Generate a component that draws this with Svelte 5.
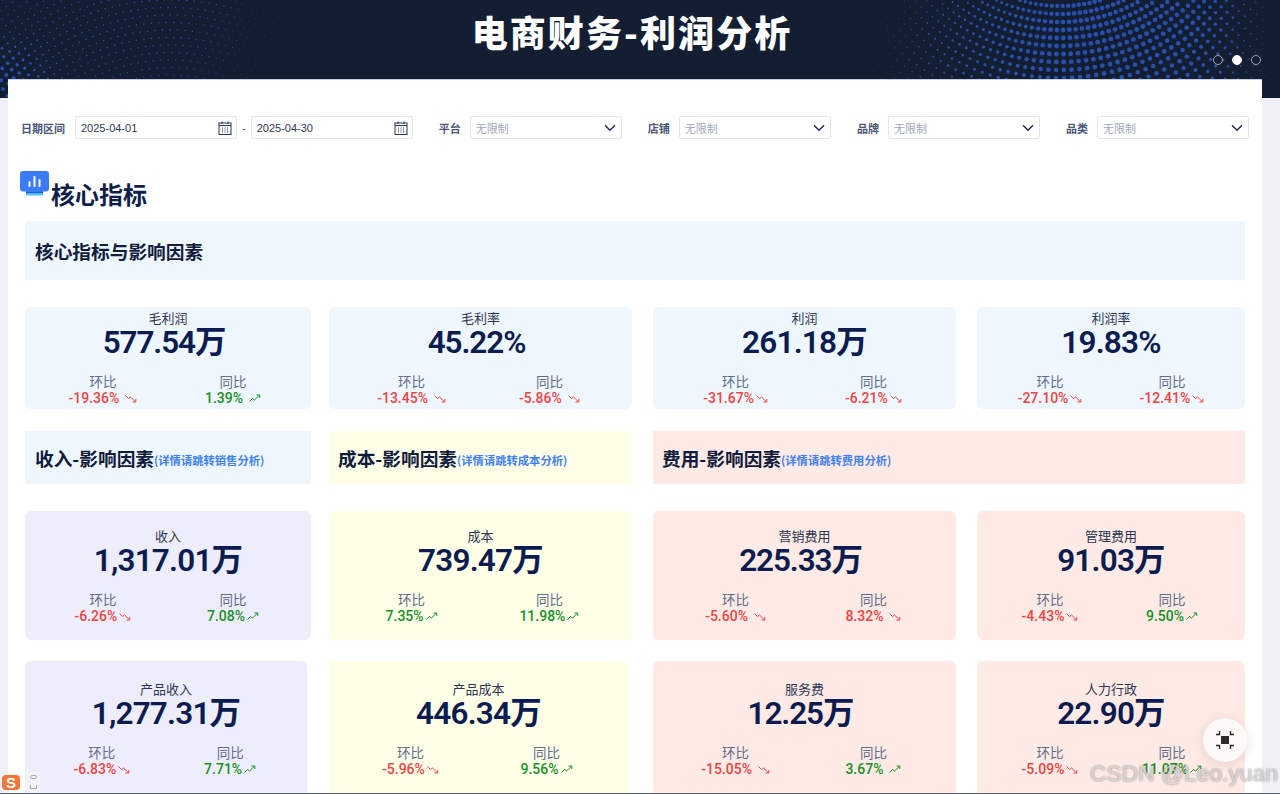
<script lang="ts">
  type Ratio = { text: string; up: boolean; good: boolean };
  type Card = { label: string; value: string; hb: Ratio; tb: Ratio; wide?: boolean };

  const r = (text: string, up: boolean, good = up): Ratio => ({ text, up, good });

  const topCards: Card[] = [
    { label: "毛利润", value: "577.54万", hb: r("-19.36%", false), tb: r("1.39%", true), wide: true },
    { label: "毛利率", value: "45.22%", hb: r("-13.45%", false), tb: r("-5.86%", false), wide: true },
    { label: "利润", value: "261.18万", hb: r("-31.67%", false), tb: r("-6.21%", false) },
    { label: "利润率", value: "19.83%", hb: r("-27.10%", false), tb: r("-12.41%", false) },
  ];
  const midCards: Card[] = [
    { label: "收入", value: "1,317.01万", hb: r("-6.26%", false), tb: r("7.08%", true) },
    { label: "成本", value: "739.47万", hb: r("7.35%", true), tb: r("11.98%", true) },
    { label: "营销费用", value: "225.33万", hb: r("-5.60%", false), tb: r("8.32%", false), wide: true },
    { label: "管理费用", value: "91.03万", hb: r("-4.43%", false), tb: r("9.50%", true) },
  ];
  const lowCards: Card[] = [
    { label: "产品收入", value: "1,277.31万", hb: r("-6.83%", false), tb: r("7.71%", true) },
    { label: "产品成本", value: "446.34万", hb: r("-5.96%", false), tb: r("9.56%", true) },
    { label: "服务费", value: "12.25万", hb: r("-15.05%", false), tb: r("3.67%", true), wide: true },
    { label: "人力行政", value: "22.90万", hb: r("-5.09%", false), tb: r("11.07%", true) },
  ];
  const rows = [
    { cls: "tops", tints: ["sky", "sky", "sky", "sky"], cards: topCards },
    { cls: "mids", tints: ["lav", "cream", "rose", "rose"], cards: midCards },
    { cls: "lows", tints: ["lav", "cream", "rose", "rose"], cards: lowCards },
  ];

  const filters = ["平台", "店铺", "品牌", "品类"];
  const links = [
    { title: "收入-影响因素", note: "(详情请跳转销售分析)", tint: "sky" },
    { title: "成本-影响因素", note: "(详情请跳转成本分析)", tint: "cream" },
    { title: "费用-影响因素", note: "(详情请跳转费用分析)", tint: "rose wide-head" },
  ];

  // header dot texture: polar grid on the right, finer rings on the left
  const spots = [
    [1105, 45, 80, 2.4],
    [1200, 10, 35, 1.0],
    [1200, 85, 30, 0.7],
    [975, 55, 70, 0.9],
    [755, 8, 18, 1.0],
    [700, 85, 35, 0.6],
    [5, 80, 25, 1.5],
    [60, 30, 100, 0.7],
    [200, 15, 70, 0.45],
  ];
  function sizeAt(x: number, y: number) {
    let s = 0;
    for (const [cx, cy, w, a] of spots) {
      const d = ((x - cx) ** 2 + (y - cy) ** 2) / (2 * w * w);
      s += a * Math.exp(-d);
    }
    return s;
  }
  function ring(cx: number, cy: number, from: number, to: number, step: number, count: number, x0: number, x1: number) {
    const out: { x: number; y: number; s: number }[] = [];
    for (let rad = from; rad < to; rad += step) {
      const n = count || Math.round((2 * Math.PI * rad) / step);
      for (let i = 0; i < n; i++) {
        const a = (i / n) * Math.PI * 2;
        const x = cx + rad * Math.cos(a);
        const y = cy + rad * Math.sin(a);
        if (x < x0 || x > x1 || y < 0 || y > 98) continue;
        const s = sizeAt(x, y);
        if (s > 0.3) out.push({ x: +x.toFixed(1), y: +y.toFixed(1), s: +Math.min(s, 2.4).toFixed(2) });
      }
    }
    return out;
  }
  const dots = [...ring(1060, -140, 130, 420, 8, 170, 800, 1280), ...ring(170, 240, 120, 420, 7.5, 0, 0, 800)];
</script>

{#snippet trend(x: Ratio)}
  <svg class="trend" class:good={x.good} viewBox="0 0 12 9" width="12" height="9" fill="none" stroke="currentColor" stroke-width="1">
    {#if x.up}
      <path d="M0.5 7.5 L3.5 4.5 L5.5 6 L10.5 1.2" />
      <path d="M7.5 1 H10.8 V4" />
    {:else}
      <path d="M0.5 1.5 L3.5 4.5 L5.5 3 L10.5 7.8" />
      <path d="M7.5 8 H10.8 V5" />
    {/if}
  </svg>
{/snippet}

{#snippet metric(name: string, x: Ratio, wide?: boolean)}
  <div class="ratio">
    <div class="ratio-name">{name}</div>
    <div class="ratio-val" class:good={x.good} class:wide>{x.text}{@render trend(x)}</div>
  </div>
{/snippet}

<div class="page">
  <header class="top">
    <svg class="texture" width="1280" height="98" viewBox="0 0 1280 98">
      {#each dots as d}
        <circle cx={d.x} cy={d.y} r={d.s} />
      {/each}
    </svg>
    <h1>电商财务-利润分析</h1>
    <div class="pager">
      <span></span>
      <span class="on"></span>
      <span></span>
    </div>
  </header>

  <main class="panel">
    <div class="filters">
      <div class="f-group">
        <span class="f-label">日期区间</span>
        {#each ["2025-04-01", "2025-04-30"] as date, i}
          {#if i > 0}<span class="dash">-</span>{/if}
          <div class="field date">
            <span>{date}</span>
            <svg viewBox="0 0 14 14" width="14" height="14" fill="none" stroke="#2b3650" stroke-width="1">
              <rect x="1" y="2" width="12" height="11.5" />
              <path d="M1 4.5 H13 M4 0.5 V3 M10 0.5 V3" />
              <path d="M4 7 H5 M6.5 7 H7.5 M9 7 H10 M4 9 H5 M6.5 9 H7.5 M9 9 H10 M4 11 H5 M6.5 11 H7.5 M9 11 H10" stroke-width="1.2" />
            </svg>
          </div>
        {/each}
      </div>
      {#each filters as name}
        <div class="f-group">
          <span class="f-label">{name}</span>
          <div class="field select">
            <span class="holder">无限制</span>
            <svg viewBox="0 0 12 8" width="12" height="8" fill="none" stroke="#1c2a48" stroke-width="1.4">
              <path d="M1 1.2 L6 6.2 L11 1.2" />
            </svg>
          </div>
        </div>
      {/each}
    </div>

    <div class="section-title">
      <svg class="s-icon" viewBox="0 0 29 25" width="29" height="25">
        <rect x="6" y="17" width="17" height="7.5" rx="1" fill="#4fc2fb" />
        <rect width="29" height="20.5" rx="3" fill="#3c7bf6" />
        <rect x="6" y="20.5" width="17" height="1.6" fill="#1d5fd0" />
        <path d="M9.5 11 V15 M14.5 6 V15 M19.5 9 V15" stroke="#fff" stroke-width="2" stroke-linecap="round" />
      </svg>
      <h2>核心指标</h2>
    </div>

    <div class="band"><h3>核心指标与影响因素</h3></div>

    {#each rows as row, ri}
      <div class="grid {row.cls}">
        {#each row.cards as c, i}
          <section class="card {row.tints[i]} c{i}">
            <div class="c-label">{c.label}</div>
            <div class="c-value" class:wide={c.wide}>{c.value}</div>
            <div class="c-ratios">
              {@render metric("环比", c.hb, c.wide)}
              {@render metric("同比", c.tb, c.wide)}
            </div>
          </section>
        {/each}
      </div>
      {#if ri === 0}
        <div class="grid heads">
          {#each links as l, i}
            <div class="head {l.tint} c{i}">
              <h3>{l.title}</h3><span>{l.note}</span>
            </div>
          {/each}
        </div>
      {/if}
    {/each}
  </main>

  <button class="fab" aria-label="全屏">
    <svg viewBox="0 0 20 20" width="20" height="20" fill="none" stroke="#2a2a2a" stroke-width="1.4">
      <rect x="6" y="6" width="8" height="8" fill="#2a2a2a" stroke="none" />
      <path d="M1 4.5 H4.5 V1 M19 4.5 H15.5 V1 M1 15.5 H4.5 V19 M19 15.5 H15.5 V19" />
    </svg>
  </button>

  <div class="ime">
    <span class="ime-s">S</span>
    <span class="ime-tools"><i></i><i class="cup"></i></span>
  </div>
  <div class="mark">CSDN @Leo.yuan</div>
  <div class="baseline"></div>
</div>

<style>
  :global(body) {
    margin: 0;
    background: #eff1f7;
  }

  .page {
    position: relative;
    height: 794px;
    overflow: hidden;
    background: #eff1f7;
    font-family: "Noto Sans CJK SC", Roboto, sans-serif;
    color: #0f1f4b;
  }

  .top {
    position: relative;
    height: 98px;
    background: #141e33;
    display: flex;
    justify-content: center;
    box-sizing: border-box;
    padding: 6px 16px 0 0;
  }
  .texture {
    position: absolute;
    left: 0;
    top: 0;
    fill: #2650ab;
  }
  .top h1 {
    position: relative;
    margin: 0;
    font-size: 36px;
    line-height: 50px;
    font-weight: 900;
    letter-spacing: 2.1px;
    color: #fff;
  }
  .pager {
    position: absolute;
    right: 19px;
    top: 55px;
    display: flex;
    gap: 9px;
  }
  .pager span {
    width: 8px;
    height: 8px;
    border: 1px solid #9aa2ad;
    border-radius: 50%;
  }
  .pager .on {
    background: #fff;
    border-color: #fff;
  }

  .panel {
    position: relative;
    margin: -19px 18px 0 8px;
    height: 715px;
    box-sizing: border-box;
    padding: 36px 17px 0;
    background: #fff;
    border-top: 1px solid #c8cfe0;
  }

  .filters {
    display: flex;
    margin: 0 -4px 0 -4px;
    justify-content: space-between;
    height: 23px;
  }
  .f-group {
    display: flex;
    align-items: center;
    gap: 9px;
  }
  .f-group:first-child {
    gap: 10px;
  }
  .f-label {
    font-size: 11px;
    font-weight: 700;
    color: #4a5578;
  }
  .dash {
    font-size: 11px;
    color: #444;
    margin: 0 -5px;
    font-family: "Liberation Sans", sans-serif;
  }
  .field {
    box-sizing: border-box;
    height: 23px;
    border: 1px solid #e2e5eb;
    border-radius: 2px;
    display: flex;
    align-items: center;
    justify-content: space-between;
    padding: 0 5px;
    font-size: 11px;
  }
  .date {
    width: 162px;
    color: #2f3a52;
    font-family: "Liberation Sans", sans-serif;
    padding-right: 4px;
  }
  .select {
    width: 152px;
  }
  .holder {
    color: #9fa8ba;
  }

  .section-title {
    position: relative;
    height: 50px;
    margin: 32px 0 0 -5px;
  }
  .s-icon {
    position: absolute;
    left: 0;
    top: 0;
  }
  .section-title h2 {
    position: absolute;
    left: 31px;
    top: 5px;
    margin: 0;
    font-size: 24px;
    line-height: 36px;
    font-weight: 700;
    white-space: nowrap;
  }

  .band {
    height: 59px;
    background: #eff7fe;
    display: flex;
    align-items: center;
    padding-left: 10px;
  }
  .band h3,
  .head h3 {
    margin: 0;
    font-size: 18.7px;
    font-weight: 700;
    color: #0f1c3d;
    white-space: nowrap;
  }

  .grid {
    display: grid;
    grid-template-columns: 283px 303px 303px 268px;
    column-gap: 21px;
  }
  .tops {
    margin-top: 27px;
  }
  .heads {
    margin-top: 22px;
    height: 53px;
  }
  .mids {
    margin-top: 27px;
  }
  .lows {
    margin-top: 21px;
  }

  .c0 {
    margin-right: -3px;
  }
  .lows .c0 {
    margin-right: 1px;
  }
  .lows .c1 {
    margin-right: 4px;
  }

  .head {
    display: flex;
    align-items: center;
    padding-left: 10px;
  }
  .head.c1 {
    padding-left: 9px;
  }
  .head.c2 {
    padding-left: 9px;
  }
  .wide-head {
    grid-column: span 2;
  }
  .head span {
    font-size: 11.3px;
    font-weight: 600;
    color: #3f80f6;
    margin-top: 5px;
    white-space: nowrap;
  }

  .sky {
    background: #eff7fe;
  }
  .lav {
    background: #eeedfc;
  }
  .cream {
    background: #ffffe8;
  }
  .rose {
    background: #ffeae5;
  }

  .card {
    border-radius: 6px;
    display: flex;
    flex-direction: column;
    align-items: center;
    box-sizing: border-box;
  }
  .tops .card {
    padding: 3px 0;
    height: 102px;
  }
  .mids .card {
    padding-top: 17px;
    height: 129px;
  }
  .lows .card {
    padding-top: 20px;
    height: 160px;
  }

  .c-label {
    font-size: 13px;
    line-height: 16px;
    color: #2c3654;
    font-weight: 400;
  }
  .c-value {
    font-family: Roboto, "Noto Sans CJK SC", sans-serif;
    font-size: 31.5px;
    line-height: 32px;
    font-weight: 600;
    color: #0c1c50;
    white-space: nowrap;
    letter-spacing: -0.8px;
    margin-top: 1px;
  }
  .c-value.wide {
    padding-right: 8px;
    letter-spacing: -1.1px;
  }
  .c-ratios {
    align-self: stretch;
    display: grid;
    grid-template-columns: 45.5% 45.5%;
    justify-content: center;
    margin-top: 13px;
  }
  .ratio {
    display: flex;
    flex-direction: column;
    align-items: center;
  }
  .ratio-name {
    font-size: 13.5px;
    line-height: 18px;
    color: #626d8c;
    font-weight: 400;
  }
  .ratio-val {
    display: flex;
    align-items: center;
    gap: 2px;
    font-family: Roboto, sans-serif;
    font-size: 14px;
    line-height: 17px;
    font-weight: 500;
    color: #ee4444;
    white-space: nowrap;
  }
  .ratio-val.good {
    color: #189028;
  }
  .ratio-val.wide {
    gap: 6px;
  }
  .trend {
    color: #ee4444;
    flex: none;
  }
  .trend.good {
    color: #189028;
  }

  .fab {
    position: absolute;
    left: 1203px;
    top: 718px;
    width: 44px;
    height: 44px;
    border: none;
    border-radius: 50%;
    background: #fdf9f8;
    box-shadow: 0 2px 12px rgba(40, 40, 60, 0.14);
    display: flex;
    align-items: center;
    justify-content: center;
    padding: 0;
  }

  .ime {
    position: absolute;
    left: 2px;
    bottom: 2px;
    display: flex;
    align-items: flex-end;
    gap: 6px;
  }
  .ime-s {
    width: 18px;
    height: 15px;
    margin-bottom: 2px;
    border-radius: 4px;
    background: #f4753a;
    color: #fff;
    font: 700 15px/15px "Liberation Sans", sans-serif;
    text-align: center;
  }
  .ime-tools {
    width: 14px;
    height: 20px;
    background: #f3f4f8;
    display: flex;
    flex-direction: column;
    align-items: center;
    justify-content: space-around;
  }
  .ime-tools i {
    width: 7px;
    height: 4px;
    border: 1px solid #a8adb8;
    border-radius: 2px;
    box-sizing: border-box;
  }
  .ime-tools .cup {
    border-top: none;
    border-radius: 0;
  }

  .mark {
    position: absolute;
    left: 1090px;
    top: 758px;
    font: 22.8px/30px "Liberation Sans", sans-serif;
    color: rgba(255, 255, 255, 0.6);
    text-shadow: 0 0 2px rgba(60, 60, 60, 0.7);
    white-space: nowrap;
  }
  .baseline {
    position: absolute;
    left: 0;
    right: 0;
    bottom: 0;
    height: 1px;
    background: #5a6272;
  }
</style>
